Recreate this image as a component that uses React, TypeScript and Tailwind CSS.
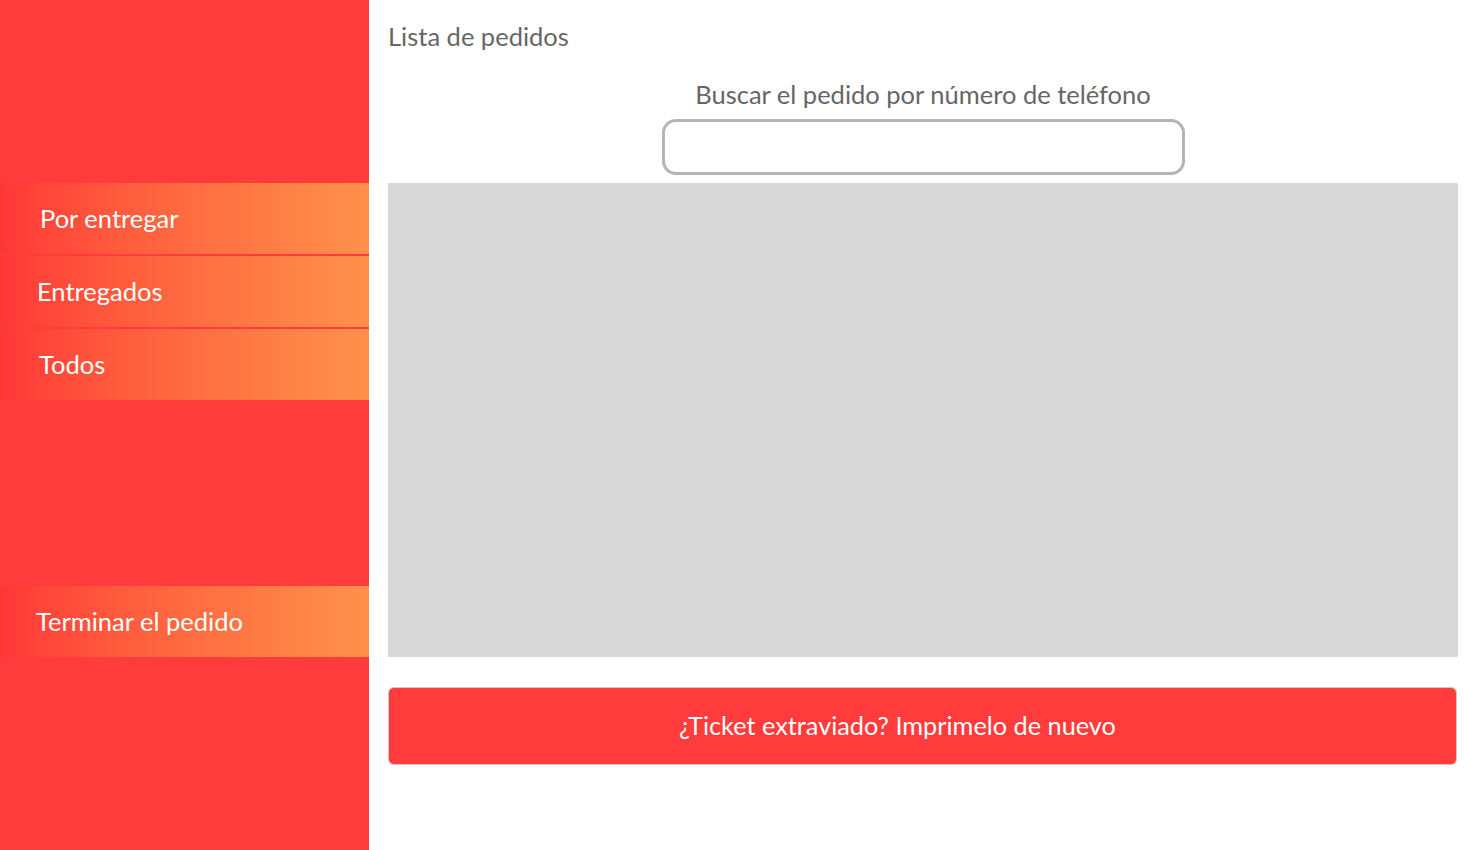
const navItems = ["Por entregar", "Entregados", "Todos"];

function NavItem({ label, pad }: { label: string; pad: string }) {
  return (
    <div
      className={`flex h-[71px] items-center bg-gradient-to-r from-[#ff3636] to-[#ff914b] text-[25.5px] text-white ${pad}`}
    >
      {label}
    </div>
  );
}

export default function App() {
  return (
    <div className="flex h-[850px] w-full bg-white font-['Lato','Open_Sans',sans-serif]">
      <aside className="flex w-[369px] shrink-0 flex-col bg-[#ff3b3b] pt-[183px]">
        <div className="flex flex-col gap-[2px]">
          <NavItem label={navItems[0]} pad="pl-[40px]" />
          <NavItem label={navItems[1]} pad="pl-[37px]" />
          <NavItem label={navItems[2]} pad="pl-[39px]" />
        </div>
        <div className="mt-[186px]">
          <NavItem label="Terminar el pedido" pad="pl-[36px]" />
        </div>
      </aside>

      <main className="flex flex-1 flex-col pl-[19px] pr-[22px] pt-[19px]">
        <h1 className="h-[34px] text-[25.5px] leading-[34px] text-[#666]">Lista de pedidos</h1>
        <label className="mt-[24px] h-[34px] text-center text-[25.5px] leading-[34px] text-[#666]">
          Buscar el pedido por número de teléfono
        </label>
        <input
          type="text"
          className="mx-auto mt-[8px] h-[56px] w-[523px] rounded-[14px] border-[3px] border-[#b5b5b5] bg-white px-4 outline-none"
        />
        <div className="mt-[8px] h-[474px] bg-[#d9d9d9]" />
        <button className="mt-[30px] h-[78px] w-[1069px] rounded-[6px] border border-[#c9c9c9] bg-[#ff3b3b] pr-[50px] text-[25.3px] text-white">
          ¿Ticket extraviado? Imprimelo de nuevo
        </button>
      </main>
    </div>
  );
}
